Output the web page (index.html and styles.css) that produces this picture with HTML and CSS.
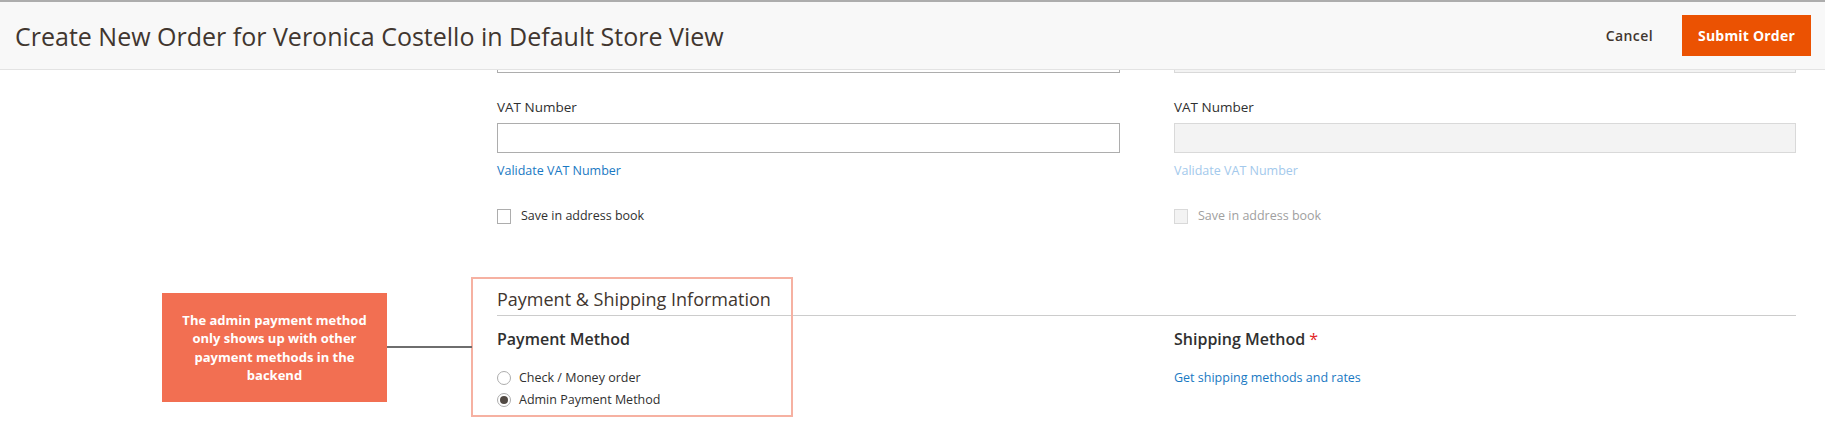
FILE: index.html
```html
<!DOCTYPE html>
<html lang="en">
<head>
<meta charset="utf-8">
<title>Create New Order</title>
<link rel="stylesheet" href="styles.css">
</head>
<body>
<header class="page-header">
  <h1 class="page-title">Create New Order for Veronica Costello in Default Store View</h1>
  <div class="page-actions">
    <button class="btn-cancel" type="button">Cancel</button>
    <button class="btn-primary" type="button">Submit Order</button>
  </div>
</header>
<main class="content">
  <div class="two-col">
    <div class="col">
      <div class="input-stub"></div>
      <label class="field-label">VAT Number</label>
      <div class="text-input"></div>
      <a class="link">Validate VAT Number</a>
      <div class="check-row"><span class="checkbox"></span><span>Save in address book</span></div>
    </div>
    <div class="col col-disabled">
      <div class="input-stub stub-disabled"></div>
      <label class="field-label">VAT Number</label>
      <div class="text-input input-disabled"></div>
      <a class="link link-disabled">Validate VAT Number</a>
      <div class="check-row row-disabled"><span class="checkbox checkbox-disabled"></span><span>Save in address book</span></div>
    </div>
  </div>
  <section class="pay-ship">
    <h2 class="section-title">Payment &amp; Shipping Information</h2>
    <div class="two-col">
      <div class="col">
        <h3 class="method-title">Payment Method</h3>
        <div class="radio-row"><span class="radio"></span><span>Check / Money order</span></div>
        <div class="radio-row"><span class="radio radio-checked"></span><span>Admin Payment Method</span></div>
      </div>
      <div class="col">
        <h3 class="method-title">Shipping Method <span class="required">*</span></h3>
        <div class="radio-row"><a class="link">Get shipping methods and rates</a></div>
      </div>
    </div>
  </section>
</main>
<div class="highlight"></div>
<div class="connector"></div>
<div class="callout">The admin payment method only shows up with other payment methods in the backend</div>
</body>
</html>
```
FILE: styles.css
```css
* { box-sizing: border-box; }
html, body { margin: 0; padding: 0; background: #fff; }
body {
  font-family: "Open Sans", "Noto Sans", sans-serif;
  color: #303030;
  width: 1825px;
  height: 435px;
  overflow: hidden;
  position: relative;
}
.page-header {
  display: flex;
  align-items: center;
  justify-content: space-between;
  height: 70px;
  background: #f8f8f8;
  border-top: 2px solid #adadad;
  border-bottom: 1px solid #e3e3e3;
  padding: 0 14px 0 15px;
  position: relative;
  z-index: 2;
}
.page-title {
  margin: 0;
  font-size: 25px;
  font-weight: 400;
  color: #41362f;
  letter-spacing: 0;
}
.page-actions { display: flex; align-items: center; gap: 29px; }
.btn-cancel {
  border: 0; background: none; padding: 0;
  font-family: inherit; font-size: 14px; font-weight: 600;
  color: #41362f; letter-spacing: 0.4px;
}
.btn-primary {
  border: 0; background: #eb5202; color: #fff;
  font-family: inherit; font-size: 14px; font-weight: 700;
  height: 41px; width: 129px; padding: 0;
  letter-spacing: 0.2px;
}
.content { margin: 0 29px 0 497px; }
.two-col { display: grid; grid-template-columns: 623px 622px; column-gap: 54px; }
.col { display: flex; flex-direction: column; align-items: flex-start; }
.input-stub {
  width: 100%; height: 3px;
  border: 1px solid #adadad; border-top: 0;
}
.stub-disabled { border-color: #d9d9d9; background: #f3f3f3; }
.field-label {
  margin-top: 25px;
  font-size: 13.5px; line-height: 19px; font-weight: 400; color: #303030;
}
.text-input {
  margin-top: 6px; width: 100%; height: 30px;
  border: 1px solid #adadad; background: #fff;
}
.input-disabled { background: #f3f3f3; border-color: #d9d9d9; }
.link {
  margin-top: 9px;
  font-size: 12.5px; line-height: 18px; color: #1979c3; text-decoration: none;
}
.link-disabled { color: #a3c9ec; }
.check-row {
  margin-top: 27px;
  display: flex; align-items: center; gap: 10px;
  font-size: 12.5px; line-height: 18px; color: #303030;
}
.row-disabled { color: #a0a0a0; }
.checkbox {
  width: 14px; height: 15px;
  border: 1px solid #adadad; background: #fff; display: inline-block;
}
.checkbox-disabled { border-color: #d9d9d9; background: #f3f3f3; }
.pay-ship { margin-top: 61px; }
.section-title {
  margin: 0;
  font-size: 18px; line-height: 26px; font-weight: 400; color: #41362f;
  padding-bottom: 3px; border-bottom: 1px solid #cccccc;
}
.method-title {
  margin: 12px 0 0;
  font-size: 16px; line-height: 23px; font-weight: 600; color: #303030;
}
.required { color: #e22626; font-weight: 400; }
.radio-row {
  display: flex; align-items: center; gap: 8px;
  font-size: 12.5px; line-height: 22px; color: #303030;
}
.col > .method-title + .radio-row { margin-top: 16px; }
.radio-row .link { margin-top: 0; line-height: 22px; }
.radio {
  width: 14px; height: 14px; border-radius: 50%;
  border: 1px solid #adadad; background: #fff; display: inline-block;
  position: relative;
}
.radio-checked::after {
  content: ""; position: absolute; left: 2px; top: 2px;
  width: 8px; height: 8px; border-radius: 50%; background: #514943;
}
.highlight {
  position: absolute; left: 471px; top: 277px;
  width: 322px; height: 140px;
  border: 2px solid #f6b1a2;
}
.connector {
  position: absolute; left: 386px; top: 346px;
  width: 86px; height: 2px; background: #6e6e6e;
}
.callout {
  position: absolute; left: 162px; top: 293px;
  width: 225px; height: 109px;
  background: #f26f52; color: #fff;
  display: flex; align-items: center; justify-content: center; text-align: center;
  padding: 0 8px;
  font-size: 13px; font-weight: 700; line-height: 18.5px; letter-spacing: 0;
}
```
